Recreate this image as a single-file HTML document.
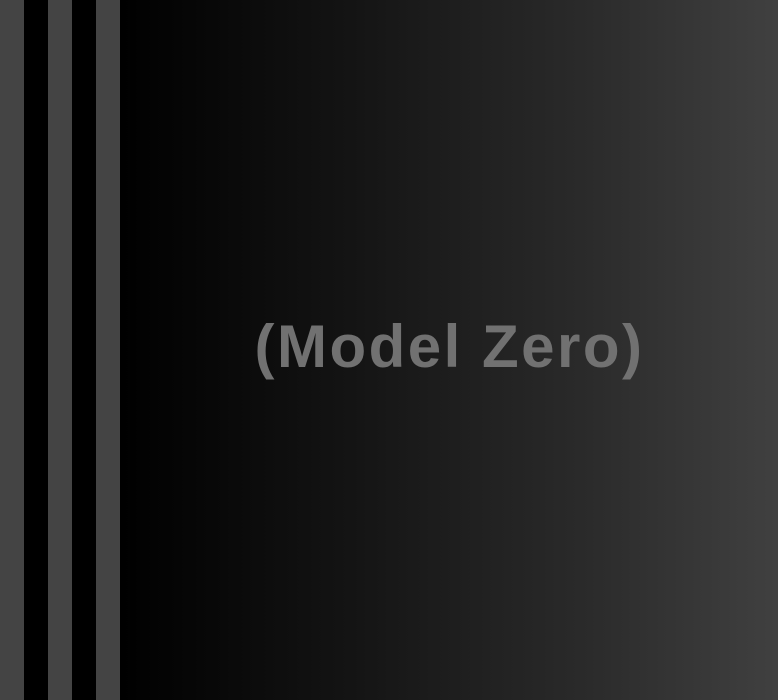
<!DOCTYPE html>
<html><head><style>
html,body{margin:0;padding:0;width:778px;height:700px;overflow:hidden;background:#000}
.bg{position:absolute;left:120px;top:0;width:658px;height:700px;background:linear-gradient(to right,#000 0%,#141414 35%,#2a2a2a 70%,#404040 100%)}
.s{position:absolute;top:0;height:700px;width:24px;background:#444}
.t{position:absolute;left:0;width:899px;top:311px;text-align:center;font:bold 60px "Liberation Sans",sans-serif;letter-spacing:2.5px;color:#717171;line-height:72px;white-space:nowrap}
</style></head><body>
<div class="bg"></div>
<div class="s" style="left:0"></div>
<div class="s" style="left:48px"></div>
<div class="s" style="left:96px"></div>
<div class="t">(Model Zero)</div>
</body></html>
